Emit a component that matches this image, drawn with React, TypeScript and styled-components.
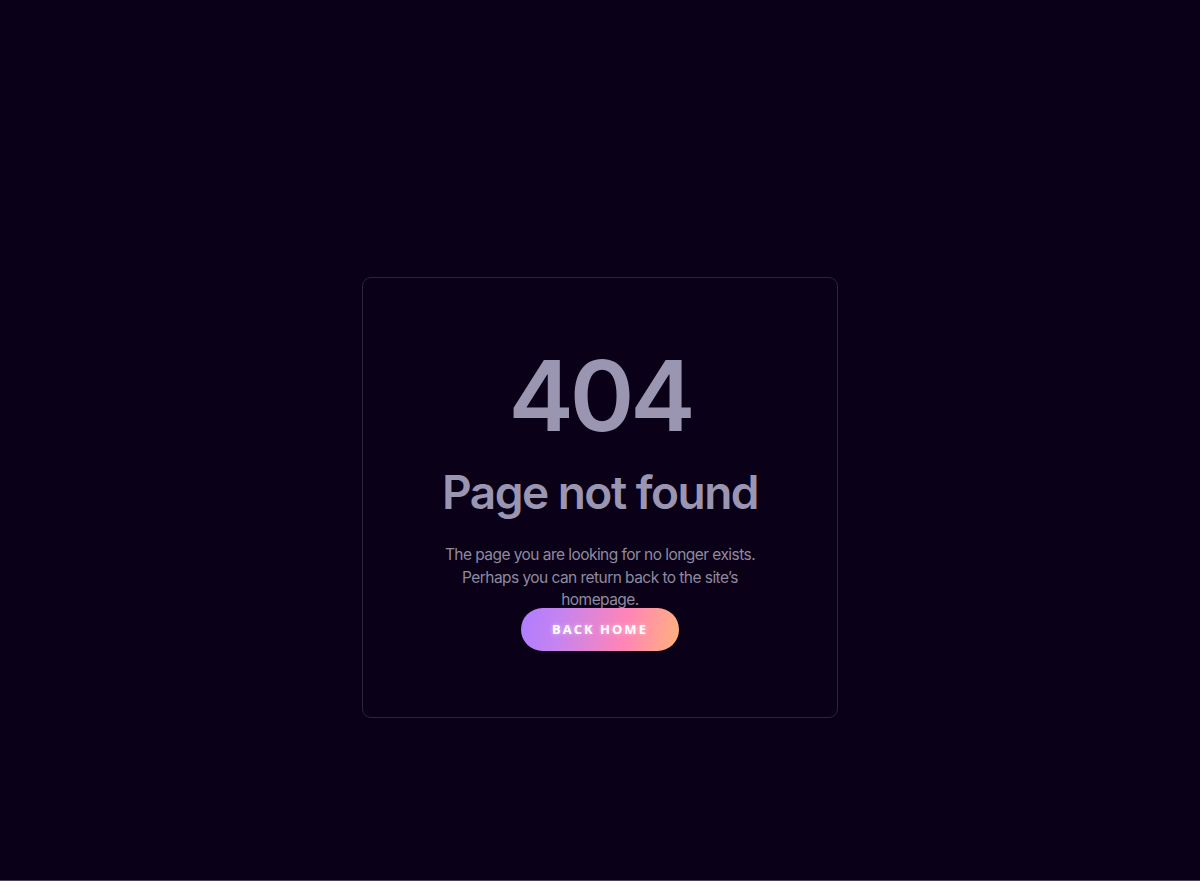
import React from "react";
import styled, { createGlobalStyle } from "styled-components";

const Global = createGlobalStyle`
  html, body { margin: 0; padding: 0; background: #ffffff; }
  * { box-sizing: border-box; }
`;

const Page = styled.main`
  height: 881px;
  background: #0a0118;
  border-bottom: 1px solid #4a4458;
  display: flex;
  justify-content: center;
  align-items: flex-start;
  padding-top: 277px;
`;

const Card = styled.section`
  width: 476px;
  height: 441px;
  border: 1px solid #2a2538;
  border-radius: 9px;
  background: #0a0118;
  display: flex;
  flex-direction: column;
  align-items: center;
  padding-top: 68px;
`;

const Code = styled.h1`
  margin: 0;
  font-family: "Inter", "Liberation Sans", sans-serif;
  font-weight: 600;
  font-size: 98px;
  line-height: 100px;
  letter-spacing: -4px;
  color: #9a95b0;
`;

const Title = styled.h2`
  margin: 18px 0 0;
  font-family: "Inter", "Liberation Sans", sans-serif;
  font-weight: 600;
  font-size: 46px;
  line-height: 56px;
  letter-spacing: -1.5px;
  color: #9a95b0;
`;

const Text = styled.p`
  margin: 24px 0 0;
  width: 320px;
  text-align: center;
  font-family: "Inter", "Liberation Sans", sans-serif;
  font-size: 15.5px;
  line-height: 22.5px;
  letter-spacing: -0.55px;
  color: #8f8a9e;
`;

const Button = styled.a`
  margin-top: -4px;
  width: 158px;
  height: 43px;
  border-radius: 22px;
  display: flex;
  align-items: center;
  justify-content: center;
  background: linear-gradient(100deg, #b07cff 0%, #c584f0 25%, #ff84b8 65%, #ffb27c 100%);
  color: #ffffff;
  font-family: "Open Sans", "Liberation Sans", sans-serif;
  font-weight: 700;
  font-size: 13px;
  letter-spacing: 2px;
  text-decoration: none;
  text-transform: uppercase;
  text-shadow: 0 0 4px rgba(255, 255, 255, 0.5);
  cursor: pointer;
`;

export default function App() {
  return (
    <>
      <Global />
      <Page>
        <Card>
          <Code>404</Code>
          <Title>Page not found</Title>
          <Text>
            The page you are looking for no longer exists. Perhaps you can return back to the site’s homepage.
          </Text>
          <Button href="#">Back home</Button>
        </Card>
      </Page>
    </>
  );
}
